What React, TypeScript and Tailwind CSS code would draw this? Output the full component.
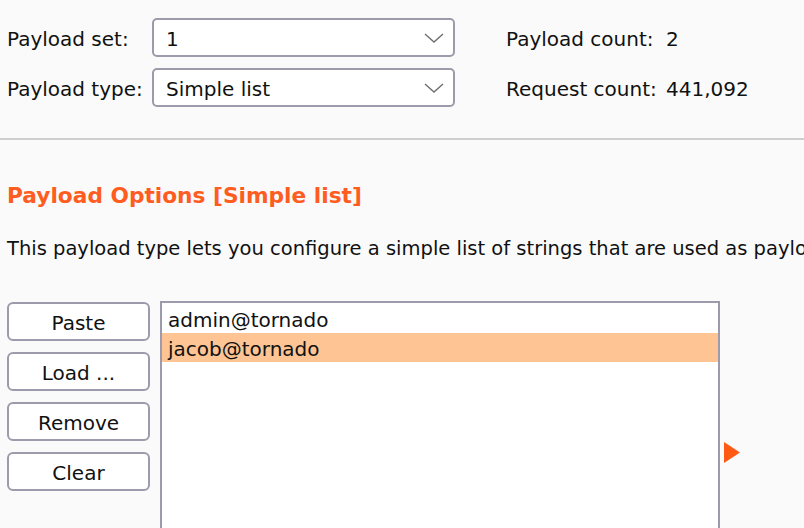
import React from "react";

const Chevron = () => (
  <svg width="20" height="10" viewBox="0 0 20 10" className="shrink-0">
    <polyline points="1,1 10,9 19,1" fill="none" stroke="#6e6e73" strokeWidth="1.4" />
  </svg>
);

const Select = ({ value }: { value: string }) => (
  <div className="w-[303px] h-[39px] bg-white border-2 border-[#9d9bab] rounded-[5px] flex items-center justify-between pl-[12px] pr-[9px]">
    <span className="leading-[24px] mt-[3px]">{value}</span>
    <Chevron />
  </div>
);

const Btn = ({ label }: { label: string }) => (
  <div className="w-[143px] h-[39px] bg-white border-2 border-[#9d9bab] rounded-[6px] flex items-center justify-center">
    <span className="leading-[24px] mt-[3px]">{label}</span>
  </div>
);

export default function App() {
  return (
    <div
      className="w-[804px] h-[528px] overflow-hidden bg-[#fafafa] text-[#111] text-[20px]"
      style={{ fontFamily: '"DejaVu Sans", "Liberation Sans", sans-serif' }}
    >
      <div className="flex pt-[18px] pl-[7px] pb-[31px]">
        <div className="flex flex-col gap-[11px]">
          <div className="flex items-center">
            <span className="w-[145px] leading-[24px] mt-[3px]">Payload set:</span>
            <Select value="1" />
          </div>
          <div className="flex items-center">
            <span className="w-[145px] leading-[24px] mt-[3px]">Payload type:</span>
            <Select value="Simple list" />
          </div>
        </div>
        <div className="flex flex-col gap-[11px] ml-[51px]">
          <div className="flex items-center h-[39px]">
            <span className="w-[160px] leading-[24px] mt-[3px]">Payload count:</span>
            <span className="leading-[24px] mt-[3px]">2</span>
          </div>
          <div className="flex items-center h-[39px]">
            <span className="w-[160px] leading-[24px] mt-[3px]">Request count:</span>
            <span className="leading-[24px] mt-[3px]">441,092</span>
          </div>
        </div>
      </div>
      <div className="h-[2px] bg-[#cecece]" />
      <div className="pl-[7px] pt-[43px]">
        <div className="text-[21.7px] font-bold leading-[26px] text-[#ff5c1f] whitespace-nowrap">
          Payload Options [Simple list]
        </div>
        <div className="mt-[28px] text-[19.5px] leading-[24px] whitespace-nowrap">
          This payload type lets you configure a simple list of strings that are used as payloads.
        </div>
        <div className="flex mt-[40px]">
          <div className="flex flex-col gap-[11px] pt-[1px]">
            <Btn label="Paste" />
            <Btn label="Load ..." />
            <Btn label="Remove" />
            <Btn label="Clear" />
          </div>
          <div className="ml-[10px] w-[560px] h-[240px] bg-white border-2 border-[#9d9bab] border-b-0 flex flex-col">
            <div className="h-[30px] pl-[6px] flex items-center">
              <span className="leading-[24px] mt-[3px]">admin@tornado</span>
            </div>
            <div className="h-[29px] pl-[6px] flex items-center bg-[#fec493]">
              <span className="leading-[24px] mt-[3px]">jacob@tornado</span>
            </div>
          </div>
          <div className="ml-[4px] mt-[141px]">
            <svg width="17" height="21" viewBox="0 0 17 21">
              <polygon points="0,0 16,10.5 0,21" fill="#ff5a14" />
            </svg>
          </div>
        </div>
      </div>
    </div>
  );
}
